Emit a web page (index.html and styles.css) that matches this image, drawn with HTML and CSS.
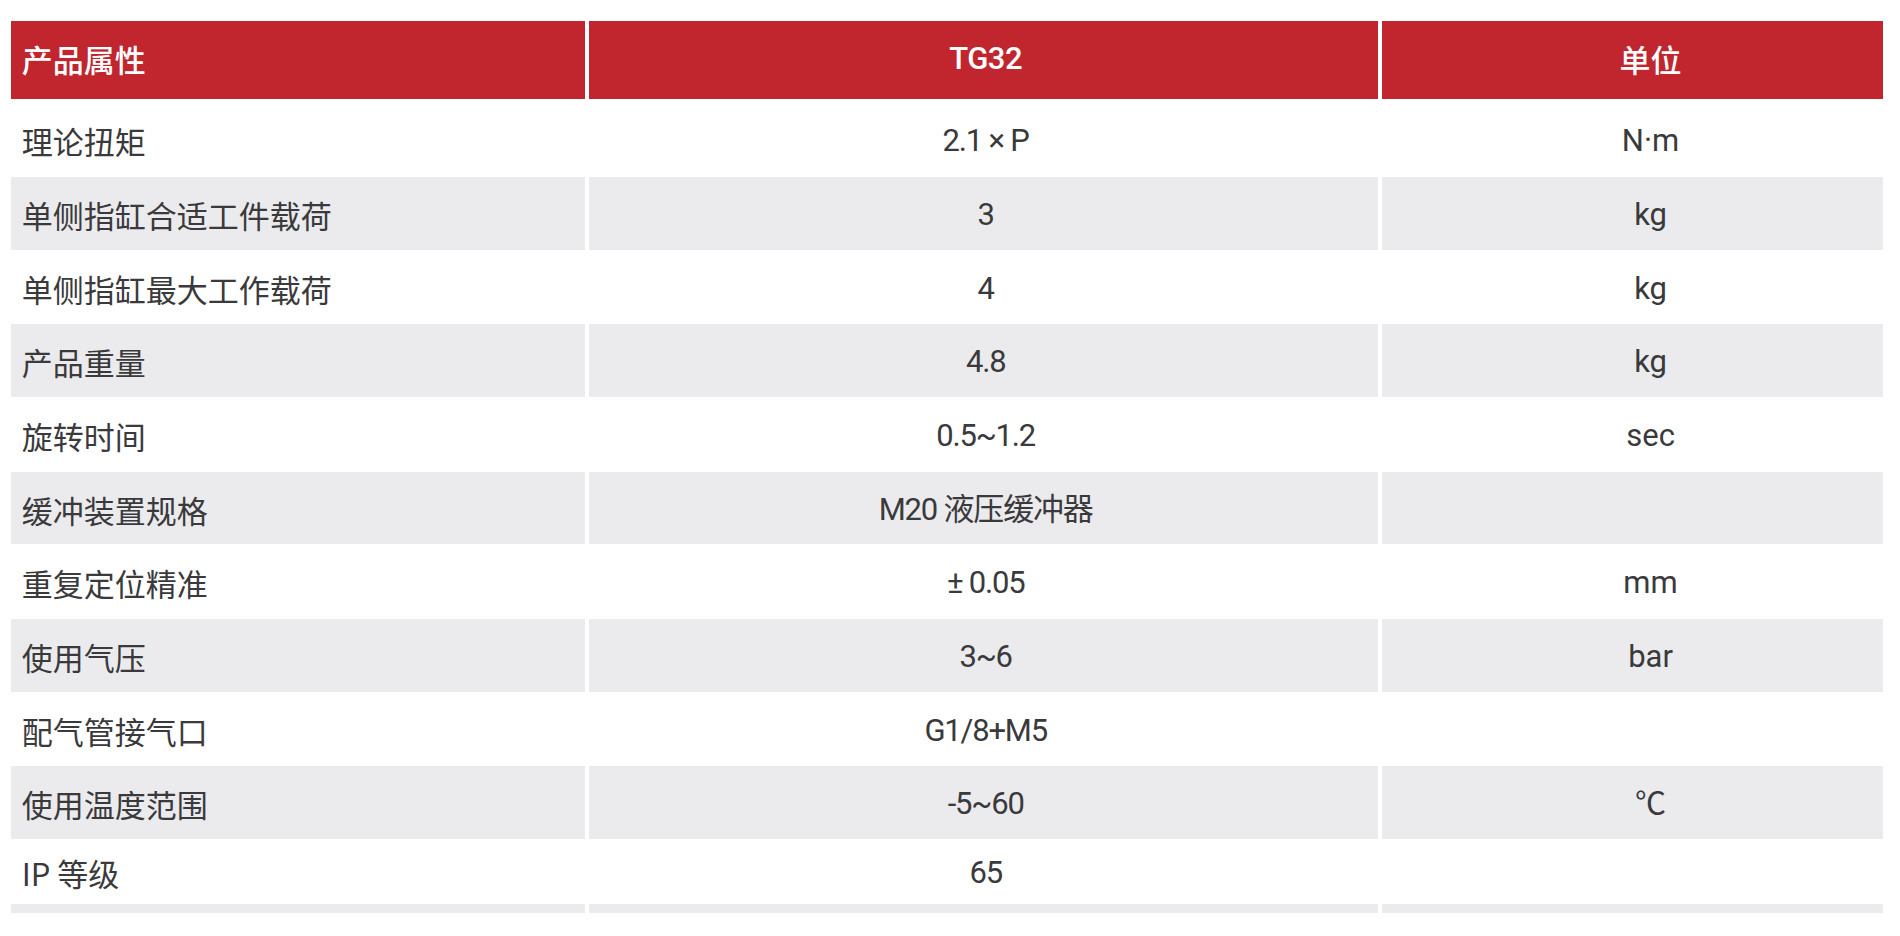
FILE: index.html
```html
<!DOCTYPE html>
<html lang="zh-CN">
<head>
<meta charset="utf-8">
<title>TG32 产品参数</title>
<link rel="stylesheet" href="styles.css">
</head>
<body>
<div class="spec">
  <div class="cell head first">产品属性</div>
  <div class="cell head mid">TG32</div>
  <div class="cell head unit">单位</div>

  <div class="cell first">理论扭矩</div>
  <div class="cell mid">2.1 × P</div>
  <div class="cell unit">N·m</div>

  <div class="cell first alt">单侧指缸合适工件载荷</div>
  <div class="cell mid alt">3</div>
  <div class="cell unit alt">kg</div>

  <div class="cell first">单侧指缸最大工作载荷</div>
  <div class="cell mid">4</div>
  <div class="cell unit">kg</div>

  <div class="cell first alt">产品重量</div>
  <div class="cell mid alt">4.8</div>
  <div class="cell unit alt">kg</div>

  <div class="cell first">旋转时间</div>
  <div class="cell mid">0.5~1.2</div>
  <div class="cell unit">sec</div>

  <div class="cell first alt">缓冲装置规格</div>
  <div class="cell mid alt">M20 液压缓冲器</div>
  <div class="cell unit alt"></div>

  <div class="cell first">重复定位精准</div>
  <div class="cell mid">± 0.05</div>
  <div class="cell unit">mm</div>

  <div class="cell first alt">使用气压</div>
  <div class="cell mid alt">3~6</div>
  <div class="cell unit alt">bar</div>

  <div class="cell first">配气管接气口</div>
  <div class="cell mid">G1/8+M5</div>
  <div class="cell unit"></div>

  <div class="cell first alt">使用温度范围</div>
  <div class="cell mid alt">-5~60</div>
  <div class="cell unit alt">℃</div>

  <div class="cell first">IP 等级</div>
  <div class="cell mid">65</div>
  <div class="cell unit"></div>

  <div class="cell alt tail"></div>
  <div class="cell alt tail"></div>
  <div class="cell alt tail"></div>
</div>
</body>
</html>
```
FILE: styles.css
```css
html, body {
  margin: 0;
  padding: 0;
  background: #ffffff;
}

body {
  font-family: Roboto, "Noto Sans CJK SC", sans-serif;
  color: #3a3a3c;
}

.spec {
  display: grid;
  grid-template-columns: 574.6px 789.4px 501px;
  grid-template-rows: 81.6px repeat(10, 72.7px) 63.3px 8.4px;
  column-gap: 3.7px;
  row-gap: 1px;
  margin: 20.7px 0 0 10.7px;
  width: max-content;
}

.cell {
  display: flex;
  align-items: center;
  justify-content: center;
  font-size: 31px;
  line-height: 1;
  padding-top: 2px;
  box-sizing: border-box;
  white-space: nowrap;
}

.cell.first {
  justify-content: flex-start;
  padding-left: 11px;
  font-family: "Noto Sans CJK SC", sans-serif;
}

.cell.mid {
  letter-spacing: -1.2px;
  padding-left: 4px;
}

.cell.unit {
  padding-left: 36px;
}

.cell.head {
  background: #c1262f;
  color: #ffffff;
  font-weight: 500;
  height: 78.6px;
  align-self: start;
  padding-top: 0;
  padding-bottom: 3px;
  font-family: "Noto Sans CJK SC", sans-serif;
  letter-spacing: 0;
}

.cell.head.mid {
  font-family: Roboto, "Noto Sans CJK SC", sans-serif;
  font-weight: 500;
  letter-spacing: -0.5px;
}

.cell.alt {
  background: #ebebed;
}

.cell.tail {
  padding: 0;
}
```
